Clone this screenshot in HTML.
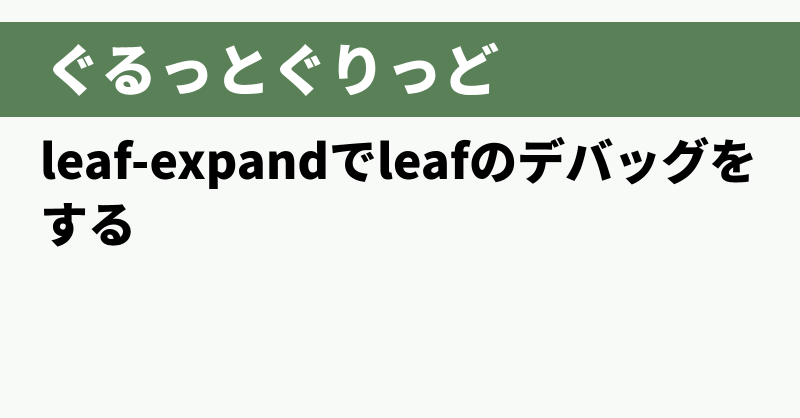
<!DOCTYPE html>
<html><head><meta charset="utf-8"><style>
html,body{margin:0;padding:0;}
body{width:800px;height:418px;background:#f8faf8;overflow:hidden;position:relative;font-family:"Noto Sans CJK JP",sans-serif;font-weight:900;}
.band{position:absolute;left:0;top:22px;width:800px;height:95px;background:#5a8058;}
.t{position:absolute;left:45px;top:20px;line-height:95px;font-size:56px;color:#fff;letter-spacing:1px;}
.b{position:absolute;left:40px;top:127px;width:760px;font-size:48px;line-height:63px;color:#000;}
</style></head><body>
<div class="band"></div>
<div class="t">ぐるっとぐりっど</div>
<div class="b">leaf-expandでleafのデバッグを<br>する</div>
</body></html>
